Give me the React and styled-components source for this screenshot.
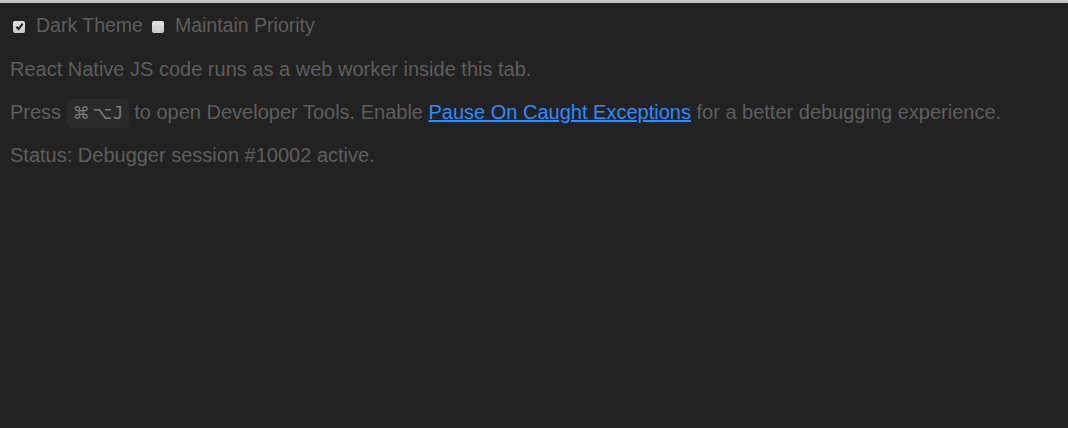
import React, { useState } from "react";
import styled, { createGlobalStyle } from "styled-components";

const Global = createGlobalStyle`
  html, body { margin: 0; padding: 0; background: #222222; }
  body { font-family: "Liberation Sans", Arial, sans-serif; }
`;

const Page = styled.div`
  min-height: 428px;
  background: #222222;
  border-top: 3px solid #c4c4c4;
  box-sizing: border-box;
  padding: 0 10px;
  color: #5e5e5e;
  font-size: 20px;
`;

const Options = styled.div`
  display: flex;
  align-items: center;
  height: 45px;
  padding-left: 3px;
  font-size: 19.5px;
`;

const Option = styled.label`
  display: flex;
  align-items: center;
  gap: 11px;
  margin-right: 9px;
  cursor: pointer;
`;

const Box = styled.span`
  width: 12px;
  height: 12px;
  box-sizing: border-box;
  border-radius: 2px;
  background: linear-gradient(#e2e2e2, #c8c8c8);
  display: flex;
  align-items: center;
  justify-content: center;
  margin-top: 2px;
`;

const Line = styled.p`
  margin: 0;
  height: 43px;
  display: flex;
  align-items: center;
  white-space: pre;
`;

const Kbd = styled.kbd`
  display: inline-flex;
  align-items: center;
  gap: 4px;
  height: 29px;
  box-sizing: border-box;
  color: #7a7a7a;
  background: #2a2a2a;
  border-radius: 5px;
  padding: 0 5px 0 6px;
  margin-top: 1px;
`;

const Key = styled.span`
  font-family: ${(p) => (p.$mono ? '"DejaVu Sans Mono", monospace' : '"DejaVu Sans", monospace')};
  font-size: ${(p) => p.$size}px;
  width: ${(p) => p.$w}px;
  text-align: center;
  line-height: 1;
`;

const Link = styled.a`
  color: #2f8cff;
  text-decoration: underline;
`;

function Check({ checked, label, onToggle }) {
  return (
    <Option onClick={onToggle}>
      <Box>
        {checked && (
          <svg width="9" height="9" viewBox="0 0 8 8">
            <path d="M1.2 4.2 L3.2 6.2 L6.8 1.4" fill="none" stroke="#1e1e1e" strokeWidth="1.7" />
          </svg>
        )}
      </Box>
      {label}
    </Option>
  );
}

export default function App() {
  const [dark, setDark] = useState(true);
  const [prio, setPrio] = useState(false);
  return (
    <Page>
      <Global />
      <Options>
        <Check checked={dark} label="Dark Theme" onToggle={() => setDark(!dark)} />
        <Check checked={prio} label="Maintain Priority" onToggle={() => setPrio(!prio)} />
      </Options>
      <Line>React Native JS code runs as a web worker inside this tab.</Line>
      <Line>
        {"Press "}
        <Kbd>
          <Key $size={17} $w={16}>⌘</Key>
          <Key $size={17} $w={16}>⌥</Key>
          <Key $mono $size={17} $w={11}>J</Key>
        </Kbd>
        {" to open Developer Tools. Enable "}
        <Link href="#">Pause On Caught Exceptions</Link>
        {" for a better debugging experience."}
      </Line>
      <Line>Status: Debugger session #10002 active.</Line>
    </Page>
  );
}
